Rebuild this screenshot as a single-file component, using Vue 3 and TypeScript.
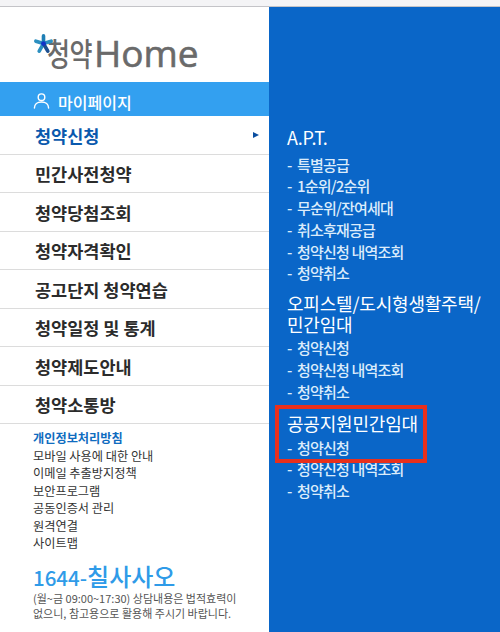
<template>
  <div class="page">
    <div class="topbar"></div>
    <div class="main">
      <aside class="side">
        <div class="logo">
          <span class="logo-kr">청약</span><span class="logo-en">Home</span>
          <svg class="logo-star" viewBox="0 0 22 24" width="21" height="23">
            <g stroke="#2b8fc0" stroke-width="3.800" stroke-linecap="round">
              <path d="M11 11V3" stroke="#1f7fb5" />
              <path d="M11 11l8-2.500" />
              <path d="M11 11l-8-2.500" />
              <path d="M11 11l-4.500 8" />
              <path d="M11 11l4.500 8" stroke="#1d4f8f" />
            </g>
            <circle cx="11" cy="11" r="2.500" fill="#1233c8" />
          </svg>
        </div>
        <div class="mypage">
          <svg viewBox="0 0 18 18" width="17" height="17" fill="none" stroke="#fff" stroke-width="1.500">
            <circle cx="9" cy="5.500" r="3.500" />
            <path d="M1.500 17c0-4 3-6.500 7.500-6.500s7.500 2.500 7.500 6.500" stroke-linecap="round" />
          </svg>
          <span>마이페이지</span>
        </div>
        <ul class="menu">
          <li v-for="(m, i) in menus" :key="m" class="menu-item" :class="{ active: i === 0 }">
            <span>{{ m }}</span>
            <i v-if="i === 0" class="arrow"></i>
          </li>
        </ul>
        <ul class="links">
          <li class="link-strong">개인정보처리방침</li>
          <li v-for="l in links" :key="l">{{ l }}</li>
        </ul>
        <div class="call">1644-<b>칠사사오</b></div>
        <p class="notice">(월~금 09:00~17:30) 상담내용은 법적효력이<br />없으니, 참고용으로 활용해 주시기 바랍니다.</p>
      </aside>
      <section class="panel">
        <div v-for="g in groups" :key="g.title" class="group">
          <h3 class="group-title" v-html="g.title"></h3>
          <ul class="subs">
            <li v-for="s in g.items" :key="s"><span class="dash">-</span>{{ s }}</li>
          </ul>
        </div>
        <div class="highlight"></div>
      </section>
    </div>
  </div>
</template>

<script setup lang="ts">
const menus: string[] = ['청약신청', '민간사전청약', '청약당첨조회', '청약자격확인', '공고단지 청약연습', '청약일정 및 통계', '청약제도안내', '청약소통방']
const links: string[] = ['모바일 사용에 대한 안내', '이메일 추출방지정책', '보안프로그램', '공동인증서 관리', '원격연결', '사이트맵']

const groups: { title: string; items: string[] }[] = [
  { title: 'A.P.T.', items: ['특별공급', '1순위/2순위', '무순위/잔여세대', '취소후재공급', '청약신청 내역조회', '청약취소'] },
  { title: '오피스텔/도시형생활주택/<br>민간임대', items: ['청약신청', '청약신청 내역조회', '청약취소'] },
  { title: '공공지원민간임대', items: ['청약신청', '청약신청 내역조회', '청약취소'] },
]
</script>

<style>
html, body { margin: 0; background: #fff; }
</style>

<style scoped>
.page {
  width: 500px;
  height: 632px;
  overflow: hidden;
  display: flex;
  flex-direction: column;
  font-family: "Noto Sans CJK KR", "Noto Sans", sans-serif;
}
ul { list-style: none; margin: 0; padding: 0; }
.topbar { height: 6px; flex: none; background: #f4f4f6; border-bottom: 1px solid #c4c4c8; }
.main { flex: 1; display: flex; min-height: 0; }
.side { width: 269px; flex: none; background: #fff; }
.logo {
  position: relative;
  height: 75px;
  padding: 15px 0 0 47px;
  box-sizing: border-box;
  display: flex;
  align-items: center;
  color: #6a6a6a;
  line-height: 1;
}
.logo-star { position: absolute; left: 33px; top: 26px; }
.logo-kr { font-size: 25px; font-weight: 500; letter-spacing: -0.5px; transform: scaleY(1.25); transform-origin: center; }
.logo-en { font-family: "Open Sans", sans-serif; font-size: 37px; font-weight: 400; margin-left: 2px; -webkit-text-stroke: 0.6px #6a6a6a; }
.mypage {
  height: 34px;
  box-sizing: border-box;
  padding: 5px 0 0 33px;
  background: #33a0f0;
  color: #fff;
  display: flex;
  align-items: center;
  gap: 8px;
  font-size: 16px;
  font-weight: 500;
}
.mypage svg { margin-top: -3px; }
.menu-item {
  height: 38.500px;
  box-sizing: border-box;
  border-bottom: 1px solid #dcdcdc;
  display: flex;
  align-items: center;
  justify-content: space-between;
  padding: 0.500px 10px 0 35px;
  color: #2b2b2b;
  font-size: 17.500px;
  font-weight: 700;
}
.menu-item.active { color: #0a59ad; }
.arrow {
  width: 0;
  height: 0;
  border-left: 6px solid #0a4ea0;
  border-top: 3.500px solid transparent;
  border-bottom: 3.500px solid transparent;
}
.links { padding: 6px 0 0 33px; font-size: 12.200px; line-height: 17.500px; color: #333; }
.link-strong { color: #0f6cc0; font-weight: 700; }
.call { margin: 9px 0 0 33px; font-size: 20.500px; line-height: 28px; color: #2f9be8; font-weight: 500; display: flex; align-items: baseline; }
.call b { font-size: 24px; font-weight: 500; }
.notice { margin: 0 0 0 33px; font-size: 11px; line-height: 15px; color: #555; white-space: nowrap; }
.panel {
  flex: 1;
  position: relative;
  background: #0a66c8;
  color: #fff;
  padding: 120px 0 0 18px;
}
.group { margin-bottom: 10.500px; }
.group:first-child { margin-bottom: 8.500px; }
.group-title { margin: 0; font-size: 18px; font-weight: 400; line-height: 21px; letter-spacing: -0.2px; white-space: nowrap; }
.subs { margin-top: 2.500px; font-size: 15px; font-weight: 500; line-height: 21.800px; color: #dcecfb; letter-spacing: -0.8px; }
.group:first-child .subs { margin-top: 5.500px; }
.dash { display: inline-block; width: 10px; }
.highlight {
  position: absolute;
  left: 6px;
  top: 398px;
  width: 152px;
  height: 58px;
  border: 4px solid #e8301c;
  box-sizing: border-box;
}
</style>
